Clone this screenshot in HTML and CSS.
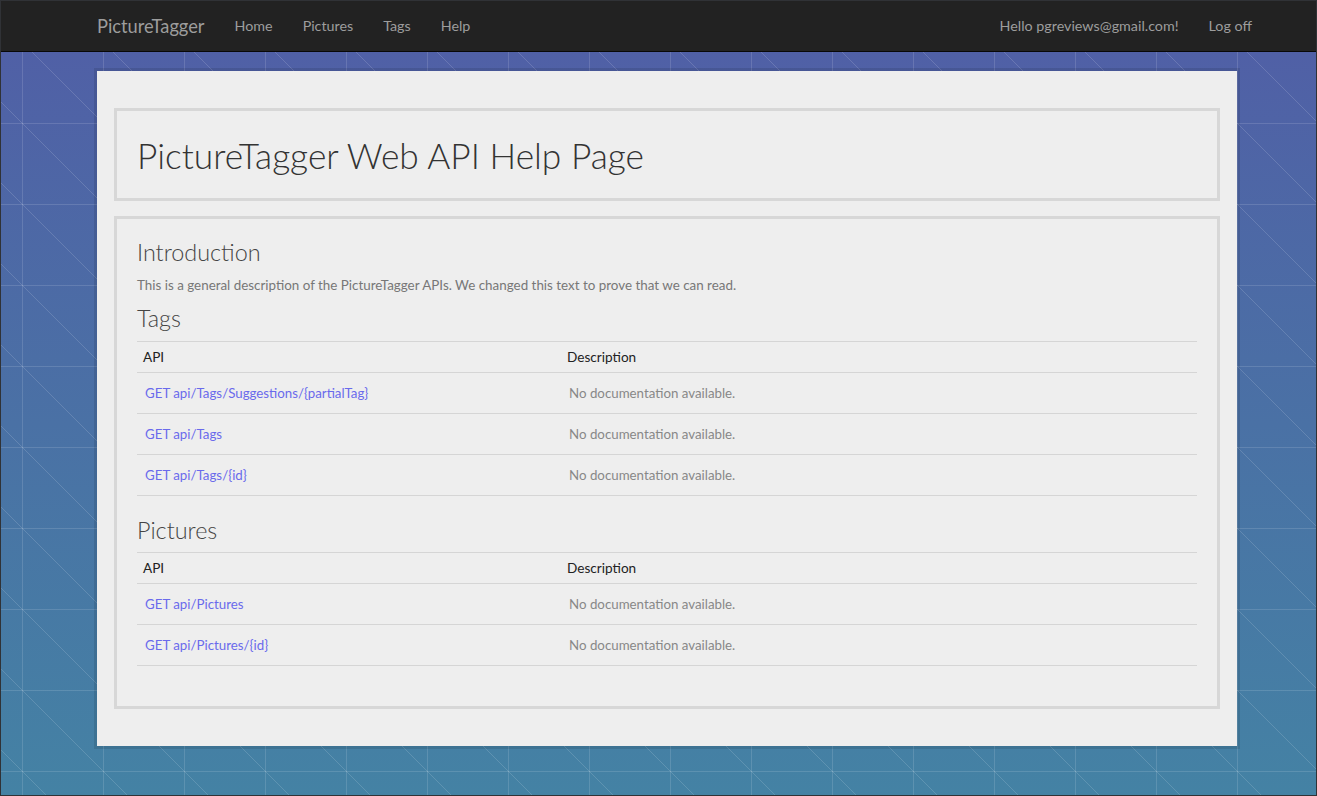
FILE: index.html
```html
<!DOCTYPE html>
<html lang="en">
<head>
<meta charset="utf-8">
<title>Help Page - PictureTagger</title>
<link rel="stylesheet" href="styles.css">
</head>
<body>
<div class="frame">
  <header class="navbar">
    <nav class="nav-left">
      <a class="brand" href="#">PictureTagger</a>
      <a class="nav-link" href="#">Home</a>
      <a class="nav-link" href="#">Pictures</a>
      <a class="nav-link" href="#">Tags</a>
      <a class="nav-link" href="#">Help</a>
    </nav>
    <nav class="nav-right">
      <a class="nav-link" href="#">Hello pgreviews@gmail.com!</a>
      <a class="nav-link" href="#">Log off</a>
    </nav>
  </header>
  <main class="stage">
    <div class="card">
      <section class="box title-box">
        <h1 class="page-title">PictureTagger Web API Help Page</h1>
      </section>
      <section class="box content-box">
        <h2 class="section-title">Introduction</h2>
        <p class="intro">This is a general description of the PictureTagger APIs. We changed this text to prove that we can read.</p>
        <h2 class="section-title group-title">Tags</h2>
        <table class="api-table">
          <thead>
            <tr><th class="col-api">API</th><th class="col-desc">Description</th></tr>
          </thead>
          <tbody>
            <tr><td class="api-name"><a href="#">GET api/Tags/Suggestions/{partialTag}</a></td><td class="api-doc">No documentation available.</td></tr>
            <tr><td class="api-name"><a href="#">GET api/Tags</a></td><td class="api-doc">No documentation available.</td></tr>
            <tr><td class="api-name"><a href="#">GET api/Tags/{id}</a></td><td class="api-doc">No documentation available.</td></tr>
          </tbody>
        </table>
        <h2 class="section-title group-title second">Pictures</h2>
        <table class="api-table">
          <thead>
            <tr><th class="col-api">API</th><th class="col-desc">Description</th></tr>
          </thead>
          <tbody>
            <tr><td class="api-name"><a href="#">GET api/Pictures</a></td><td class="api-doc">No documentation available.</td></tr>
            <tr><td class="api-name"><a href="#">GET api/Pictures/{id}</a></td><td class="api-doc">No documentation available.</td></tr>
          </tbody>
        </table>
      </section>
    </div>
  </main>
</div>
</body>
</html>
```
FILE: styles.css
```css
* { box-sizing: border-box; }
html, body { margin: 0; padding: 0; }
body {
  font-family: Lato, "Open Sans", "Liberation Sans", sans-serif;
  font-size: 13px;
  color: #333;
  background: #303236;
}
.frame {
  width: 1317px;
  height: 796px;
  border: 1px solid #303236;
  display: flex;
  flex-direction: column;
  overflow: hidden;
}
.navbar {
  height: 51px;
  flex: none;
  background: #222;
  border-bottom: 1px solid #080808;
  display: flex;
  justify-content: space-between;
  align-items: center;
  padding: 0 49px 0 81px;
}
.nav-left, .nav-right { display: flex; align-items: center; }
.navbar a {
  color: #9d9d9d;
  text-decoration: none;
  padding: 0 15px;
  line-height: 50px;
}
.brand { font-size: 18.3px; }
.nav-link { font-size: 14.3px; }
.nav-left .nav-link:first-of-type { margin-left: 1px; }
.stage {
  flex: 1;
  padding: 19px 0 0 96px;
  background-color: #4a70a5;
  background-image:
    linear-gradient(to right, rgba(255,255,255,0.13) 1px, transparent 1px),
    linear-gradient(to bottom, rgba(255,255,255,0.13) 1px, transparent 1px),
    linear-gradient(45deg, transparent calc(50% - 0.6px), rgba(255,255,255,0.14) 50%, transparent calc(50% + 0.6px)),
    linear-gradient(to bottom, #5060a6, #4482a4);
  background-size: 81px 81px, 81px 81px, 81px 81px, 100% 100%;
  background-position: 21px 71px, 21px 71px, 21px 71px, 0 0;
  background-repeat: repeat, repeat, repeat, no-repeat;
}
.card {
  width: 1140px;
  height: 675px;
  background: #eeeeee;
  box-shadow: 0 0 0 3px rgba(0,0,0,0.1);
  padding: 37px 17px;
  display: flex;
  flex-direction: column;
  gap: 15px;
}
.box {
  border: 3px solid #d7d7d7;
}
.title-box {
  height: 93px;
  padding: 24px 20px 0;
}
.page-title {
  margin: 0;
  font-size: 35.3px;
  line-height: 42px;
  font-weight: 300;
  color: #333;
}
.content-box {
  height: 493px;
  padding: 20px 20px 0;
}
.section-title {
  margin: 0;
  font-size: 23.4px;
  line-height: 26px;
  font-weight: 300;
  color: #444;
}
.intro {
  margin: 10px 0 0;
  font-size: 13.4px;
  line-height: 20px;
  color: #777;
}
.group-title { margin-top: 10px; margin-bottom: 10px; }
.group-title.second { margin-top: 21px; margin-bottom: 9px; }
.api-table {
  width: 100%;
  border-collapse: collapse;
}
.api-table th, .api-table td {
  border-top: 1px solid #d5d5d5;
  text-align: left;
  vertical-align: middle;
  padding: 0;
}
.api-table tbody tr:last-child td { border-bottom: 1px solid #d5d5d5; }
.api-table th {
  height: 31px;
  font-size: 13.6px;
  font-weight: 400;
  color: #222;
  padding-left: 6px;
}
.api-table td { height: 41px; padding-left: 8px; font-size: 13.3px; }
.col-api { width: 40%; }
.api-name a { color: #6a6aec; text-decoration: none; }
.api-doc { color: #888; }
```
